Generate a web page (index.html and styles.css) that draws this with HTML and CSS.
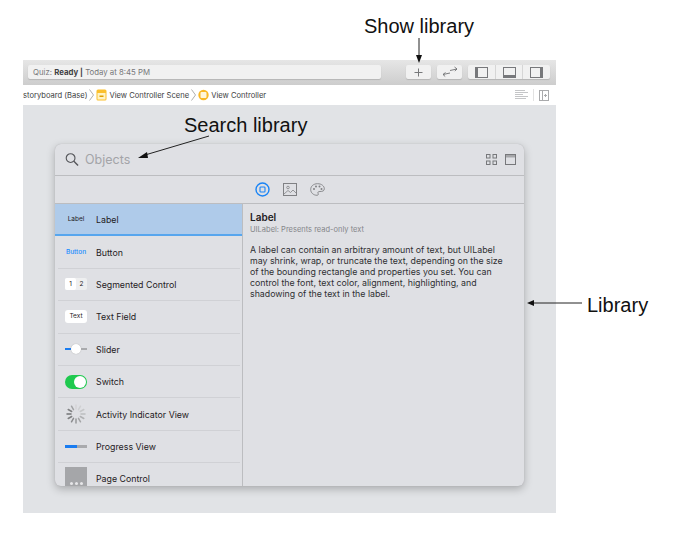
FILE: index.html
```html
<!DOCTYPE html>
<html lang="en">
<head>
  <meta charset="UTF-8">
  <title>Xcode library</title>
  <link rel="stylesheet" href="styles.css">
</head>
<body>

  <div class="page">
    <div class="window">
      <!-- Toolbar -->
      <div class="toolbar">
        <div class="status"><span>Quiz:</span> <b>Ready |</b> <span>Today at 8:45 PM</span></div>
        <div class="tool-btn plus-btn">
          <svg width="11" height="11" viewBox="0 0 11 11"><path d="M5.500 1.500v8M1.500 5.500h8" stroke="#77787a" stroke-width="1" fill="none"/></svg>
        </div>
        <div class="tool-btn swap-btn">
          <svg width="16" height="12" viewBox="0 0 16 12"><path d="M8 4.500L15 3M12.500 1L15 3L12.800 5M1 8.500L8 7M3.500 6.500L1 8.500L3.200 10.500" stroke="#6e6f72" stroke-width=".9" fill="none"/></svg>
        </div>
        <div class="tool-group">
          <div class="tool-cell">
            <svg width="13" height="11" viewBox="0 0 13 11"><rect x=".5" y=".5" width="12" height="10" fill="none" stroke="#77787b"/><rect x="1" y="1" width="2" height="9" fill="#77787b"/></svg>
          </div>
          <div class="tool-cell">
            <svg width="13" height="11" viewBox="0 0 13 11"><rect x=".5" y=".5" width="12" height="10" fill="none" stroke="#77787b"/><rect x="1" y="8" width="11" height="2" fill="#77787b"/></svg>
          </div>
          <div class="tool-cell">
            <svg width="13" height="11" viewBox="0 0 13 11"><rect x=".5" y=".5" width="12" height="10" fill="none" stroke="#77787b"/><rect x="10" y="1" width="2" height="9" fill="#77787b"/></svg>
          </div>
        </div>
      </div>

      <!-- Jump bar -->
      <div class="pathbar">
        <span>storyboard (Base)</span>
        <svg width="5" height="12" viewBox="0 0 5 12"><path d="M.5 .5L4.500 6L.5 11.500" fill="none" stroke="#9b9b9b" stroke-width=".8"/></svg>
        <svg width="11" height="12" viewBox="0 0 11 12"><rect x=".5" y=".5" width="10" height="11" rx="1.500" fill="#fbc02d"/><rect x="1.500" y="4" width="8" height="6.500" fill="#fff3c4"/><rect x="3.500" y="6.500" width="4" height="1.500" fill="#e0a000"/></svg>
        <span>View Controller Scene</span>
        <svg width="5" height="12" viewBox="0 0 5 12"><path d="M.5 .5L4.500 6L.5 11.500" fill="none" stroke="#9b9b9b" stroke-width=".8"/></svg>
        <svg width="11" height="12" viewBox="0 0 11 12"><circle cx="5.500" cy="6" r="5.200" fill="#f9b826"/><rect x="2.500" y="3" width="6" height="6" rx="1" fill="#fff6da"/></svg>
        <span>View Controller</span>
        <div class="path-tools">
          <svg width="13" height="10" viewBox="0 0 13 10"><path d="M0 .5h10M0 2.500h13M0 4.500h8M0 6.500h13M0 8.500h11" stroke="#c4c5c7" stroke-width="1"/></svg>
          <i class="path-sep"></i>
          <svg width="10" height="11" viewBox="0 0 10 11"><rect x=".5" y=".5" width="9" height="10" fill="none" stroke="#a9aaac"/><path d="M3.500 .5v10M5 5.500h3M6.500 4v3" stroke="#a9aaac" fill="none"/></svg>
        </div>
      </div>

      <!-- Canvas with the library panel -->
      <div class="canvas">
        <div class="library">
          <div class="search-row">
            <svg width="14" height="15" viewBox="0 0 15 15"><circle cx="6" cy="6" r="4.700" fill="none" stroke="#55565a" stroke-width="1.200"/><path d="M9.500 9.500L14 14" stroke="#55565a" stroke-width="1.500"/></svg>
            <span class="search-text">Objects</span>
            <div class="view-icons">
              <svg width="11" height="11" viewBox="0 0 11 11"><g fill="none" stroke="#77787b"><rect x=".5" y=".5" width="3.500" height="3.500"/><rect x="7" y=".5" width="3.500" height="3.500"/><rect x=".5" y="7" width="3.500" height="3.500"/><rect x="7" y="7" width="3.500" height="3.500"/></g></svg>
              <svg width="11" height="11" viewBox="0 0 11 11"><rect x=".5" y=".5" width="10" height="10" fill="none" stroke="#77787b"/><rect x="1" y="1" width="9" height="2.500" fill="#a5a6a9"/></svg>
            </div>
          </div>

          <div class="tab-row">
            <svg width="15" height="15" viewBox="0 0 15 15"><circle cx="7.500" cy="7.500" r="6.500" fill="none" stroke="#1a84f5" stroke-width="1.400"/><rect x="5" y="5" width="5" height="5" rx=".8" fill="none" stroke="#1a84f5" stroke-width="1.100"/></svg>
            <svg width="14" height="13" viewBox="0 0 14 13"><rect x=".5" y=".5" width="13" height="12" fill="none" stroke="#808184"/><circle cx="5" cy="4.500" r="1.300" fill="none" stroke="#808184" stroke-width=".8"/><path d="M1 11L5 7.500L7.500 9.500L10 7L13 10" fill="none" stroke="#808184" stroke-width=".8"/></svg>
            <svg width="15" height="13" viewBox="0 0 15 13"><path d="M7.500 .7C3.500 .7 .7 3.200 .7 6.500C.7 9.800 3.500 12.300 7 12.300C8.500 12.300 8.500 11 8 10.200C7.500 9 8.500 8.500 10 8.500C12.500 8.500 14.300 8 14.300 5.800C14.300 3 11.500 .7 7.500 .7Z" fill="none" stroke="#808184" stroke-width=".9"/><circle cx="4" cy="6" r="1" fill="#808184"/><circle cx="6" cy="3.500" r="1" fill="#808184"/><circle cx="9.500" cy="3.500" r="1" fill="#808184"/><circle cx="11.500" cy="6" r="1" fill="#808184"/></svg>
          </div>

          <div class="library-body">
            <div class="list">
              <div class="row selected">
                <div class="thumb"><span class="thumb-label">Label</span></div>
                <span>Label</span>
              </div>
              <div class="row">
                <div class="thumb"><span class="thumb-button">Button</span></div>
                <span>Button</span>
              </div>
              <div class="row">
                <div class="thumb">
                  <div class="segments"><span class="seg-on">1</span><span>2</span></div>
                </div>
                <span>Segmented Control</span>
              </div>
              <div class="row">
                <div class="thumb"><span class="text-field">Text</span></div>
                <span>Text Field</span>
              </div>
              <div class="row">
                <div class="thumb">
                  <div class="slider"><i class="slider-fill"></i><i class="slider-knob"></i><i class="slider-rest"></i></div>
                </div>
                <span>Slider</span>
              </div>
              <div class="row">
                <div class="thumb"><div class="switch"><i></i></div></div>
                <span>Switch</span>
              </div>
              <div class="row">
                <div class="thumb">
                  <svg width="20" height="20" viewBox="0 0 20 20" stroke-width="1.500" stroke-linecap="round">
                    <path d="M10 1v4" stroke="#d4d5d7"/><path d="M14.500 2.200l-2 3.500" stroke="#cfd0d2"/><path d="M17.800 5.500l-3.500 2" stroke="#c6c7c9"/><path d="M19 10h-4" stroke="#bcbdbf"/><path d="M17.800 14.500l-3.500-2" stroke="#b0b1b3"/><path d="M14.500 17.800l-2-3.500" stroke="#a4a5a7"/><path d="M10 19v-4" stroke="#97989a"/><path d="M5.500 17.800l2-3.500" stroke="#8b8c8e"/><path d="M2.200 14.500l3.500-2" stroke="#7f8082"/><path d="M1 10h4" stroke="#737476"/><path d="M2.200 5.500l3.500 2" stroke="#808183"/><path d="M5.500 2.200l2 3.500" stroke="#a2a3a5"/>
                  </svg>
                </div>
                <span>Activity Indicator View</span>
              </div>
              <div class="row">
                <div class="thumb"><div class="progress"><i></i></div></div>
                <span>Progress View</span>
              </div>
              <div class="row">
                <div class="thumb"><div class="page-control"><i></i><i></i><i></i></div></div>
                <span>Page Control</span>
              </div>
            </div>

            <div class="detail">
              <h2>Label</h2>
              <p class="detail-sub">UILabel: Presents read-only text</p>
              <p class="detail-text">A label can contain an arbitrary amount of text, but UILabel may shrink, wrap, or truncate the text, depending on the size of the bounding rectangle and properties you set. You can control the font, text color, alignment, highlighting, and shadowing of the text in the label.</p>
            </div>
          </div>
        </div>
      </div>
    </div>

    <!-- Callouts drawn over the screenshot -->
    <div class="callout show-callout">Show library</div>
    <div class="callout search-callout">Search library</div>
    <div class="callout library-callout">Library</div>
    <svg class="arrows" width="685" height="536" viewBox="0 0 685 536">
      <path d="M419 38V57" stroke="#222" stroke-width="1" fill="none"/>
      <path d="M416 55H422L419 63Z" fill="#111"/>
      <path d="M209 136L145 155" stroke="#222" stroke-width="1" fill="none"/>
      <path d="M147 152L138 158L148 158Z" fill="#111"/>
      <path d="M582 303H532" stroke="#222" stroke-width="1" fill="none"/>
      <path d="M534 300V306L527 303Z" fill="#111"/>
    </svg>
  </div>

</body>
</html>
```

FILE: styles.css
```css
body {
  margin: 0;
  background-color: #fff;
  font-family: "Inter", "Liberation Sans", sans-serif;
}
.page {
  position: relative;
  width: 685px;
  height: 536px;
  padding: 60px 0 0 23px;
  box-sizing: border-box;
  overflow: hidden;
}
.window {
  width: 533px;
  height: 453px;
  display: flex;
  flex-direction: column;
}

/* toolbar */
.toolbar {
  height: 25px;
  box-sizing: border-box;
  padding: 5px 6px 6px 5px;
  display: flex;
  align-items: stretch;
  background: linear-gradient(#e6e6e6, #cdcdcd);
}
.status {
  width: 353px;
  box-sizing: border-box;
  padding-left: 5px;
  background-color: #f1f1f1;
  border-radius: 2px;
  box-shadow: 0 1px 1px #b5b5b5;
  font-size: 7.800px;
  line-height: 15px;
  color: #77787a;
  white-space: pre;
}
.status b {
  color: #3f4043;
}
.tool-btn {
  width: 25px;
  display: flex;
  align-items: center;
  justify-content: center;
  background-color: #f1f1f1;
  border-radius: 2px;
  box-shadow: 0 1px 1px #b5b5b5;
}
.plus-btn {
  margin-left: 25px;
}
.swap-btn {
  margin-left: 6px;
}
.tool-group {
  margin-left: 6px;
  flex: 1;
  display: flex;
  background-color: #f1f1f1;
  border-radius: 2px;
  box-shadow: 0 1px 1px #b5b5b5;
}
.tool-cell {
  flex: 1;
  display: flex;
  align-items: center;
  justify-content: center;
  border-left: 1px solid #d6d6d6;
}
.tool-cell:first-child {
  border-left: none;
}

/* jump bar */
.pathbar {
  height: 20px;
  display: flex;
  align-items: center;
  gap: 2px;
  background-color: #fff;
  font-size: 7.600px;
  color: #3d3e41;
  white-space: nowrap;
}
.path-tools {
  margin-left: auto;
  margin-right: 7px;
  display: flex;
  align-items: center;
  gap: 5px;
}
.path-sep {
  width: 1px;
  height: 12px;
  background-color: #e2e2e2;
}

/* canvas and panel */
.canvas {
  flex: 1;
  min-height: 0;
  box-sizing: border-box;
  padding: 39px 32px 27px;
  background-color: #e1e3e6;
}
.library {
  height: 100%;
  display: flex;
  flex-direction: column;
  overflow: hidden;
  background-color: #dfe0e4;
  border-radius: 6px;
  box-shadow: 0 0 1px #a9aaad, 0 3px 8px rgba(0, 0, 0, .25);
}
.search-row {
  height: 32px;
  flex: none;
  box-sizing: border-box;
  padding: 0 8px 0 10px;
  display: flex;
  align-items: center;
  gap: 6px;
  border-bottom: 1px solid #bcbdc0;
}
.search-text {
  font-size: 12.500px;
  color: #a3a4a8;
}
.view-icons {
  margin-left: auto;
  display: flex;
  gap: 8px;
}
.tab-row {
  height: 28px;
  flex: none;
  box-sizing: border-box;
  display: flex;
  align-items: center;
  justify-content: center;
  gap: 13px;
  border-bottom: 1px solid #bcbdc0;
}
.library-body {
  flex: 1;
  min-height: 0;
  display: flex;
}
.list {
  width: 187px;
  flex: none;
  border-right: 1px solid #bcbdc0;
}
.row {
  height: 32.4px;
  box-sizing: border-box;
  margin: 0 2px 0 3px;
  padding-left: 7px;
  display: flex;
  align-items: center;
  font-size: 8.800px;
  color: #1f2023;
  border-bottom: 1px solid #d0d1d5;
}
.row.selected {
  margin: 0;
  padding-left: 10px;
  background-color: #afcbea;
  border-bottom: 2px solid #57a6ee;
}
.thumb {
  width: 22px;
  margin-right: 9px;
  display: flex;
  align-items: center;
  justify-content: center;
  flex: none;
}
.thumb-label {
  font-size: 6.500px;
}
.thumb-button {
  font-size: 6.500px;
  font-weight: 500;
  color: #1a8cff;
}
.segments {
  width: 22px;
  height: 12px;
  display: flex;
  background-color: #eeeff0;
  border-radius: 2px;
  font-size: 6.500px;
  line-height: 12px;
  text-align: center;
}
.segments span {
  flex: 1;
}
.seg-on {
  background-color: #fff;
  border-radius: 2px;
}
.text-field {
  width: 22px;
  height: 13px;
  background-color: #fff;
  border-radius: 3px;
  font-size: 6.500px;
  line-height: 13px;
  text-align: center;
}
.slider {
  width: 22px;
  height: 10px;
  display: flex;
  align-items: center;
}
.slider-fill {
  width: 6px;
  height: 2px;
  background-color: #1a7cf0;
}
.slider-knob {
  width: 10px;
  height: 10px;
  border-radius: 50%;
  background-color: #fff;
  box-shadow: 0 0 1px #999;
}
.slider-rest {
  width: 6px;
  height: 2px;
  background-color: #a9aaad;
}
.switch {
  width: 22px;
  height: 14px;
  box-sizing: border-box;
  padding: 1px;
  display: flex;
  justify-content: flex-end;
  background-color: #1fc94f;
  border-radius: 7px;
}
.switch i {
  width: 12px;
  height: 12px;
  border-radius: 50%;
  background-color: #fff;
}
.progress {
  width: 22px;
  height: 3px;
  background-color: #a9aaad;
}
.progress i {
  display: block;
  width: 12px;
  height: 3px;
  background-color: #1a7cf0;
}
.page-control {
  width: 22px;
  height: 24px;
  box-sizing: border-box;
  padding-top: 15px;
  display: flex;
  justify-content: center;
  gap: 2px;
  background-color: #a5a6a9;
}
.page-control i {
  width: 3px;
  height: 3px;
  border-radius: 50%;
  background-color: #e6e6e8;
}
.detail {
  flex: 1;
  padding: 7px 20px 0 7px;
  color: #2f3033;
}
.detail h2 {
  margin: 0;
  font-size: 10px;
  line-height: 12px;
  font-weight: 600;
  color: #1f2023;
}
.detail-sub {
  margin: 2px 0 0;
  font-size: 7.500px;
  line-height: 10px;
  color: #85868a;
}
.detail-text {
  margin: 9px 0 0;
  font-size: 8.800px;
  line-height: 11px;
}

/* callouts */
.callout {
  position: absolute;
  font-family: "Liberation Sans", Arial, sans-serif;
  font-size: 20px;
  line-height: 24px;
  color: #111;
  white-space: nowrap;
}
.show-callout {
  left: 364px;
  top: 14px;
}
.search-callout {
  left: 184px;
  top: 113px;
}
.library-callout {
  left: 587px;
  top: 293px;
}
.arrows {
  position: absolute;
  left: 0;
  top: 0;
  pointer-events: none;
}
```
